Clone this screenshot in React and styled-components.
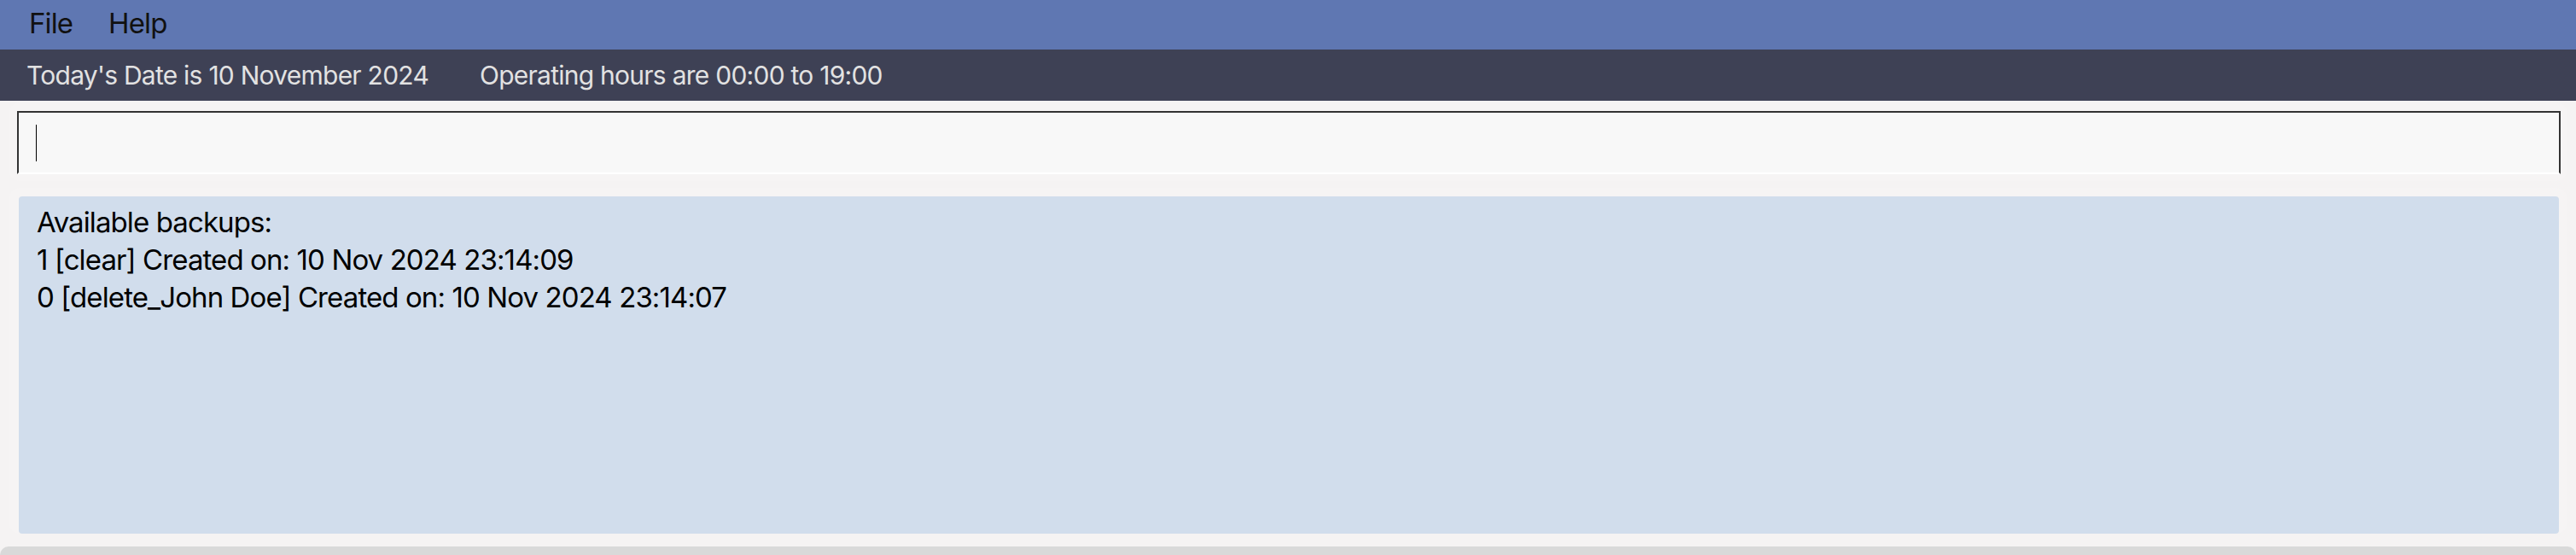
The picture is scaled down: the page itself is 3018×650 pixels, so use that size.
import styled, { createGlobalStyle } from "styled-components";

const GlobalStyle = createGlobalStyle`
  html, body {
    margin: 0;
    padding: 0;
    background: #f5f3f3;
    font-family: Inter, "Noto Sans", sans-serif;
  }
`;

const Window = styled.div`
  width: 3018px;
  height: 650px;
  display: flex;
  flex-direction: column;
  overflow: hidden;
  background: #f5f3f3;
`;

const MenuBar = styled.div`
  height: 58px;
  background: #5f77b2;
  display: flex;
  align-items: center;
  gap: 42px;
  padding: 0 0 4px 34px;
  box-sizing: border-box;
`;

const MenuItem = styled.span`
  font-size: 33px;
  letter-spacing: -0.9px;
  color: #111;
`;

const StatusBar = styled.div`
  height: 60px;
  background: #3e4155;
  display: flex;
  align-items: center;
  gap: 60px;
  padding-left: 31px;
  box-sizing: border-box;
  color: #e2e2e2;
  font-size: 30px;
  letter-spacing: -0.75px;
`;

const Panel = styled.div`
  margin: ${(p) => p.$margin};
  padding: ${(p) => p.$padding};
  background: #f6f4f4;
  border-radius: 14px;
`;

const CommandBox = styled.div`
  height: 70px;
  border: 2px solid #333;
  border-bottom: 2px solid #fff;
  background: #f8f8f8;
  display: flex;
  align-items: center;
  padding-left: 20px;
`;

const Caret = styled.div`
  width: 1px;
  height: 43px;
  background: #000;
`;

const ResultBox = styled.div`
  height: 395px;
  box-sizing: border-box;
  background: #d1ddec;
  border-radius: 4px;
  padding: 8px 21px;
  font-size: 33px;
  line-height: 44px;
  letter-spacing: -0.9px;
  color: #000;
`;

const Footer = styled.div`
  flex: 1;
  margin-top: 15px;
  background: #d9d9d9;
  border-radius: 14px 14px 0 0;
`;

export default function App() {
  return (
    <>
      <GlobalStyle />
      <Window>
        <MenuBar>
          <MenuItem>File</MenuItem>
          <MenuItem>Help</MenuItem>
        </MenuBar>
        <StatusBar>
          <span>Today's Date is 10 November 2024</span>
          <span>Operating hours are 00:00 to 19:00</span>
        </StatusBar>
        <Panel $margin="2px 10px 0 10px" $padding="10px 8px 8px 10px">
          <CommandBox>
            <Caret />
          </CommandBox>
        </Panel>
        <Panel $margin="8px 10px 0 10px" $padding="10px 10px 0 12px">
          <ResultBox>
            <div>Available backups:</div>
            <div>1 [clear] Created on: 10 Nov 2024 23:14:09</div>
            <div>0 [delete_John Doe] Created on: 10 Nov 2024 23:14:07</div>
          </ResultBox>
        </Panel>
        <Footer />
      </Window>
    </>
  );
}
